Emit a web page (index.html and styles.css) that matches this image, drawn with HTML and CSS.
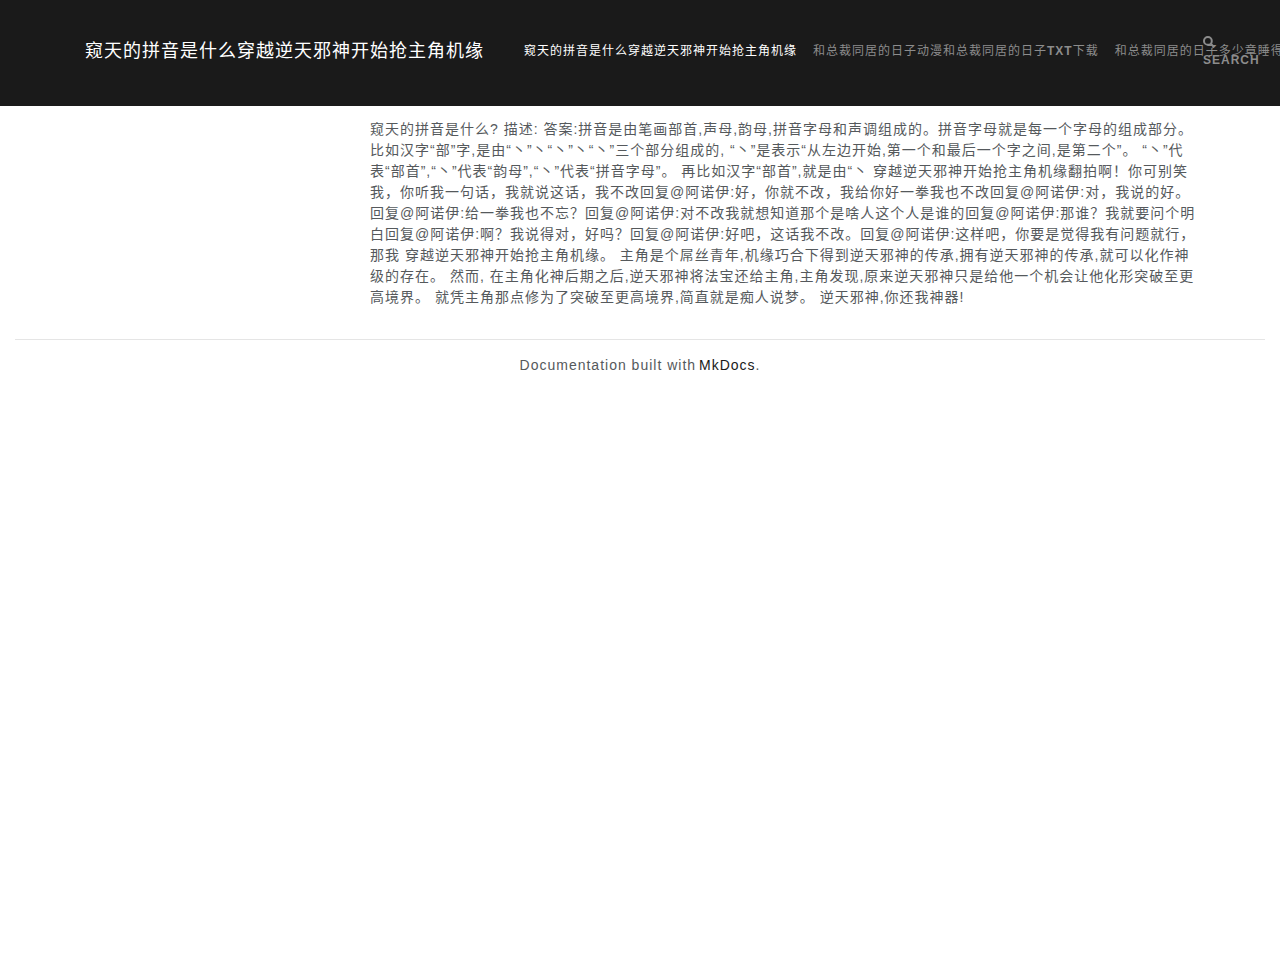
FILE: index.html
```
<!DOCTYPE html>
<html lang="zh-CN">
	<head>
		<meta charset="utf-8">
		<title>窥天的拼音是什么穿越逆天邪神开始抢主角机缘</title>
		<link rel="stylesheet" href="styles.css">
	</head>
	<body>
		<div class="navbar">
			<div class="container">
				<a class="navbar-brand" href="#">窥天的拼音是什么穿越逆天邪神开始抢主角机缘</a>
				<!-- 导航链接，超出部分不换行 -->
				<ul class="nav">
					<li><a class="nav-link active" href="#">窥天的拼音是什么穿越逆天邪神开始抢主角机缘</a></li>
					<li><a class="nav-link" href="#">和总裁同居的日子动漫和总裁同居的日子<b>TXT</b>下载</a></li>
					<li><a class="nav-link" href="#">和总裁同居的日子多少章睡得</a></li>
				</ul>
				<a class="search" href="#">
					<svg class="search-icon" viewBox="0 0 12 12"><circle cx="4.9" cy="4.9" r="3.9"/><path d="M7.8 7.8L11.2 11.2"/></svg>
					<span>SEARCH</span>
				</a>
			</div>
		</div>
		<div class="container main">
			<div class="content">
				<p>窥天的拼音是什么? 描述: 答案:拼音是由笔画部首,声母,韵母,拼音字母和声调组成的。拼音字母就是每一个字母的组成部分。 比如汉字“部”字,是由“丶”丶“丶”丶“丶”三个部分组成的, “丶”是表示“从左边开始,第一个和最后一个字之间,是第二个”。 “丶”代表“部首”,“丶”代表“韵母”,“丶”代表“拼音字母”。 再比如汉字“部首”,就是由“丶 穿越逆天邪神开始抢主角机缘翻拍啊！你可别笑我，你听我一句话，我就说这话，我不改回复@阿诺伊:好，你就不改，我给你好一拳我也不改回复@阿诺伊:对，我说的好。回复@阿诺伊:给一拳我也不忘？回复@阿诺伊:对不改我就想知道那个是啥人这个人是谁的回复@阿诺伊:那谁？我就要问个明白回复@阿诺伊:啊？我说得对，好吗？回复@阿诺伊:好吧，这话我不改。回复@阿诺伊:这样吧，你要是觉得我有问题就行，那我 穿越逆天邪神开始抢主角机缘。 主角是个屌丝青年,机缘巧合下得到逆天邪神的传承,拥有逆天邪神的传承,就可以化作神级的存在。 然而, 在主角化神后期之后,逆天邪神将法宝还给主角,主角发现,原来逆天邪神只是给他一个机会让他化形突破至更高境界。 就凭主角那点修为了突破至更高境界,简直就是痴人说梦。 逆天邪神,你还我神器!</p>
			</div>
		</div>
		<div class="footer">
			<hr>
			<p>Documentation built with <a href="#">MkDocs</a>.</p>
		</div>
	</body>
</html>
```

FILE: styles.css
```
*{
	box-sizing: border-box;
}
body{
	margin: 0;
	font-family: "Liberation Sans", "Noto Sans CJK SC", sans-serif;
	font-size: 14px;
	line-height: 21px;
	letter-spacing: 1px;
	color: #55595c;
	background-color: #fff;
	overflow-x: hidden;
}
p{
	margin: 0;
}
a{
	color: #1a1a1a;
	text-decoration: none;
}
.container{
	display: flex;
	width: 1140px;
	margin: 0 auto;
	padding: 0 15px;
}
.navbar{
	height: 106px;
	padding-top: 24px;
	background-color: #1a1a1a;
}
.navbar .container{
	height: 54px;
	align-items: center;
}
.navbar-brand{
	margin-right: 32px;
	padding-top: 1px;
	font-size: 18px;
	white-space: nowrap;
	color: #fff;
}
.nav{
	display: flex;
	flex: 1;
	min-width: 0;
	margin: 0;
	padding: 0;
	list-style: none;
	white-space: nowrap;
}
.nav-link{
	display: block;
	padding: 8px;
	font-size: 12px;
	line-height: 19px;
	color: #8c8c8c;
}
.nav-link.active{
	color: #fff;
}
/* 不占宽度，保证导航能用满整行 */
.search{
	display: flex;
	flex-direction: column;
	width: 8px;
	margin-right: -8px;
	padding-left: 8px;
	font-size: 12px;
	font-weight: bold;
	line-height: 18px;
	color: #8c8c8c;
}
.search-icon{
	width: 12px;
	height: 12px;
	margin: 3px 0;
	fill: none;
	stroke: #8c8c8c;
	stroke-width: 2;
}
.main{
	padding-top: 13px;
}
.content{
	flex: none;
	width: 826px;
	margin-left: 285px;
}
.footer{
	padding: 0 15px;
	text-align: center;
}
.footer hr{
	margin: 31px 0 15px;
	border: 0;
	border-top: 1px solid #e5e5e5;
}
.footer a{
	margin-left: -2px;
}
```
